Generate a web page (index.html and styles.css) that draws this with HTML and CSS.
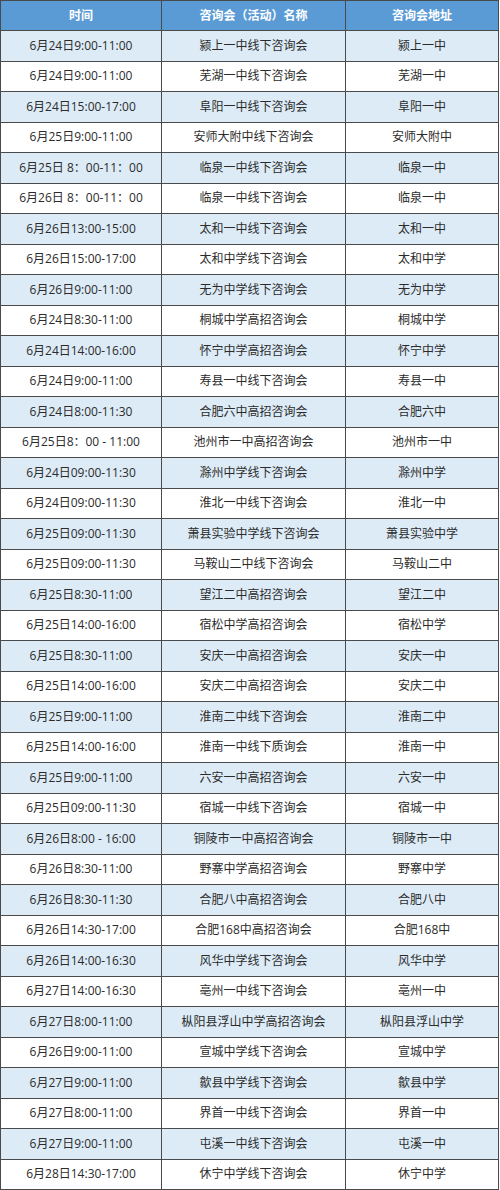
FILE: index.html
```html
<!DOCTYPE html>
<html lang="zh-CN">
<head>
<meta charset="utf-8">
<title>咨询会安排</title>
<link rel="stylesheet" href="styles.css">
</head>
<body>
<table class="schedule">
<colgroup>
<col class="c-time"><col class="c-name"><col class="c-addr">
</colgroup>
<thead>
<tr><th>时间</th><th>咨询会（活动）名称</th><th>咨询会地址</th></tr>
</thead>
<tbody>
<tr><td>6月24日9:00-11:00</td><td>颍上一中线下咨询会</td><td>颍上一中</td></tr>
<tr><td>6月24日9:00-11:00</td><td>芜湖一中线下咨询会</td><td>芜湖一中</td></tr>
<tr><td>6月24日15:00-17:00</td><td>阜阳一中线下咨询会</td><td>阜阳一中</td></tr>
<tr><td>6月25日9:00-11:00</td><td>安师大附中线下咨询会</td><td>安师大附中</td></tr>
<tr><td>6月25日 8：00-11：00</td><td>临泉一中线下咨询会</td><td>临泉一中</td></tr>
<tr><td>6月26日 8：00-11：00</td><td>临泉一中线下咨询会</td><td>临泉一中</td></tr>
<tr><td>6月26日13:00-15:00</td><td>太和一中线下咨询会</td><td>太和一中</td></tr>
<tr><td>6月26日15:00-17:00</td><td>太和中学线下咨询会</td><td>太和中学</td></tr>
<tr><td>6月26日9:00-11:00</td><td>无为中学线下咨询会</td><td>无为中学</td></tr>
<tr><td>6月24日8:30-11:00</td><td>桐城中学高招咨询会</td><td>桐城中学</td></tr>
<tr><td>6月24日14:00-16:00</td><td>怀宁中学高招咨询会</td><td>怀宁中学</td></tr>
<tr><td>6月24日9:00-11:00</td><td>寿县一中线下咨询会</td><td>寿县一中</td></tr>
<tr><td>6月24日8:00-11:30</td><td>合肥六中高招咨询会</td><td>合肥六中</td></tr>
<tr><td>6月25日8：00 - 11:00</td><td>池州市一中高招咨询会</td><td>池州市一中</td></tr>
<tr><td>6月24日09:00-11:30</td><td>滁州中学线下咨询会</td><td>滁州中学</td></tr>
<tr><td>6月24日09:00-11:30</td><td>淮北一中线下咨询会</td><td>淮北一中</td></tr>
<tr><td>6月25日09:00-11:30</td><td>萧县实验中学线下咨询会</td><td>萧县实验中学</td></tr>
<tr><td>6月25日09:00-11:30</td><td>马鞍山二中线下咨询会</td><td>马鞍山二中</td></tr>
<tr><td>6月25日8:30-11:00</td><td>望江二中高招咨询会</td><td>望江二中</td></tr>
<tr><td>6月25日14:00-16:00</td><td>宿松中学高招咨询会</td><td>宿松中学</td></tr>
<tr><td>6月25日8:30-11:00</td><td>安庆一中高招咨询会</td><td>安庆一中</td></tr>
<tr><td>6月25日14:00-16:00</td><td>安庆二中高招咨询会</td><td>安庆二中</td></tr>
<tr><td>6月25日9:00-11:00</td><td>淮南二中线下咨询会</td><td>淮南二中</td></tr>
<tr><td>6月25日14:00-16:00</td><td>淮南一中线下质询会</td><td>淮南一中</td></tr>
<tr><td>6月25日9:00-11:00</td><td>六安一中高招咨询会</td><td>六安一中</td></tr>
<tr><td>6月25日09:00-11:30</td><td>宿城一中线下咨询会</td><td>宿城一中</td></tr>
<tr><td>6月26日8:00 - 16:00</td><td>铜陵市一中高招咨询会</td><td>铜陵市一中</td></tr>
<tr><td>6月26日8:30-11:00</td><td>野寨中学高招咨询会</td><td>野寨中学</td></tr>
<tr><td>6月26日8:30-11:30</td><td>合肥八中高招咨询会</td><td>合肥八中</td></tr>
<tr><td>6月26日14:30-17:00</td><td>合肥168中高招咨询会</td><td>合肥168中</td></tr>
<tr><td>6月26日14:00-16:30</td><td>风华中学线下咨询会</td><td>风华中学</td></tr>
<tr><td>6月27日14:00-16:30</td><td>亳州一中线下咨询会</td><td>亳州一中</td></tr>
<tr><td>6月27日8:00-11:00</td><td>枞阳县浮山中学高招咨询会</td><td>枞阳县浮山中学</td></tr>
<tr><td>6月26日9:00-11:00</td><td>宣城中学线下咨询会</td><td>宣城中学</td></tr>
<tr><td>6月27日9:00-11:00</td><td>歙县中学线下咨询会</td><td>歙县中学</td></tr>
<tr><td>6月27日8:00-11:00</td><td>界首一中线下咨询会</td><td>界首一中</td></tr>
<tr><td>6月27日9:00-11:00</td><td>屯溪一中线下咨询会</td><td>屯溪一中</td></tr>
<tr><td>6月28日14:30-17:00</td><td>休宁中学线下咨询会</td><td>休宁中学</td></tr>
</tbody>
</table>
</body>
</html>
```

FILE: styles.css
```css
html, body {
  margin: 0;
  padding: 0;
  background: #ffffff;
}

.schedule {
  border-collapse: collapse;
  table-layout: fixed;
  width: 498px;
  font-family: "Open Sans", "Noto Sans CJK SC", sans-serif;
  font-size: 12px;
  color: #2b2b2b;
}

.c-time { width: 161px; }
.c-name { width: 184px; }
.c-addr { width: 153px; }

.schedule th,
.schedule td {
  border: 1px solid #4a4a4a;
  padding: 0 2px;
  text-align: center;
  vertical-align: middle;
  white-space: nowrap;
  line-height: 1;
}

.schedule thead tr {
  height: 30px;
}

.schedule th {
  background: #5b9bd5;
  color: #ffffff;
  font-weight: bold;
}

.schedule tbody tr {
  height: 30.5px;
}

.schedule tbody tr:nth-child(odd) {
  background: #ddebf7;
}

.schedule tbody tr:nth-child(even) {
  background: #ffffff;
}
```
